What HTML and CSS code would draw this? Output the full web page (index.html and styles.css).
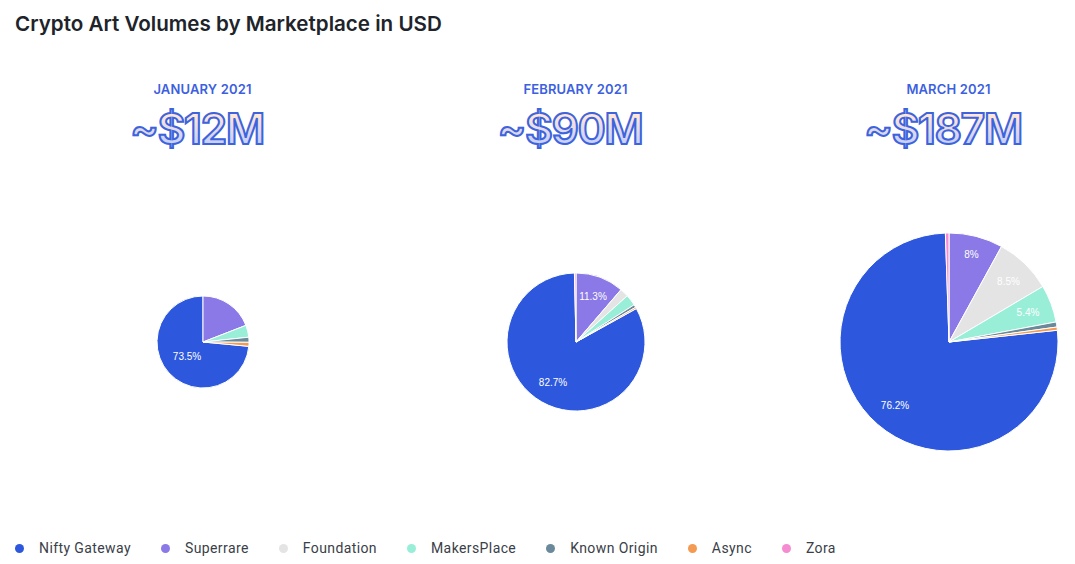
FILE: index.html
```html
<!DOCTYPE html>
<html lang="en">
<head>
<meta charset="utf-8">
<title>Crypto Art Volumes by Marketplace in USD</title>
<link rel="stylesheet" href="styles.css">
</head>
<body>
<main class="page">
  <h1 class="title">Crypto Art Volumes by Marketplace in USD</h1>
  <section class="charts">
    <article class="chart">
      <h2 class="month">JANUARY 2021</h2>
      <p class="total">~$12M</p>
      <div class="pie-area">
        <svg class="pie pie-small" viewBox="-47 -47 94 94" aria-label="January 2021 pie">
          <path class="s-nifty" d="M0 0L45.8 4.33A46 46 0 1 1 0 -46Z"/>
          <path class="s-super" d="M0 0L0 -46A46 46 0 0 1 42.89 -16.63Z"/>
          <path class="s-makers" d="M0 0L42.89 -16.63A46 46 0 0 1 45.75 -4.81Z"/>
          <path class="s-known" d="M0 0L45.75 -4.81A46 46 0 0 1 46 .32Z"/>
          <path class="s-async" d="M0 0L46 .32A46 46 0 0 1 45.8 4.33Z"/>
          <text class="label" x="-16" y="17.5" text-anchor="middle">73.5%</text>
        </svg>
      </div>
    </article>
    <article class="chart">
      <h2 class="month">FEBRUARY 2021</h2>
      <p class="total">~$90M</p>
      <div class="pie-area">
        <svg class="pie pie-medium" viewBox="-70 -70 140 140" aria-label="February 2021 pie">
          <path class="s-nifty" d="M0 0L60.35 -33.45A69 69 0 1 1 -1.57 -68.98Z"/>
          <path class="s-super" d="M0 0L0 -69A69 69 0 0 1 45 -52.31Z"/>
          <path class="s-found" d="M0 0L45 -52.31A69 69 0 0 1 51.28 -46.17Z"/>
          <path class="s-makers" d="M0 0L51.28 -46.17A69 69 0 0 1 58.13 -37.18Z"/>
          <path class="s-known" d="M0 0L58.13 -37.18A69 69 0 0 1 59.64 -34.71Z"/>
          <path class="s-async" d="M0 0L59.64 -34.71A69 69 0 0 1 60.35 -33.45Z"/>
          <path class="s-zora" d="M0 0L-1.57 -68.98A69 69 0 0 1 0 -69Z"/>
          <text class="label" x="-23" y="43.5" text-anchor="middle">82.7%</text>
          <text class="label" x="17" y="-42.5" text-anchor="middle">11.3%</text>
        </svg>
      </div>
    </article>
    <article class="chart">
      <h2 class="month">MARCH 2021</h2>
      <p class="total">~$187M</p>
      <div class="pie-area">
        <svg class="pie pie-large" viewBox="-110 -110 220 220" aria-label="March 2021 pie">
          <path class="s-nifty" d="M0 0L108.37 -11.77A109 109 0 1 1 -3.61 -108.94Z"/>
          <path class="s-super" d="M0 0L0 -109A109 109 0 0 1 52.5 -95.5Z"/>
          <path class="s-found" d="M0 0L52.5 -95.5A109 109 0 0 1 93.8 -55.5Z"/>
          <path class="s-makers" d="M0 0L93.8 -55.5A109 109 0 0 1 107.1 -20.05Z"/>
          <path class="s-known" d="M0 0L107.1 -20.05A109 109 0 0 1 107.96 -14.98Z"/>
          <path class="s-async" d="M0 0L107.96 -14.98A109 109 0 0 1 108.37 -11.77Z"/>
          <path class="s-zora" d="M0 0L-3.61 -108.94A109 109 0 0 1 0 -109Z"/>
          <text class="label" x="-54" y="66.5" text-anchor="middle">76.2%</text>
          <text class="label" x="22.5" y="-84" text-anchor="middle">8%</text>
          <text class="label" x="59.5" y="-57" text-anchor="middle">8.5%</text>
          <text class="label" x="79" y="-26" text-anchor="middle">5.4%</text>
        </svg>
      </div>
    </article>
  </section>
  <ul class="legend">
    <li class="legend-item"><span class="dot d-nifty"></span>Nifty Gateway</li>
    <li class="legend-item"><span class="dot d-super"></span>Superrare</li>
    <li class="legend-item"><span class="dot d-found"></span>Foundation</li>
    <li class="legend-item"><span class="dot d-makers"></span>MakersPlace</li>
    <li class="legend-item"><span class="dot d-known"></span>Known Origin</li>
    <li class="legend-item"><span class="dot d-async"></span>Async</li>
    <li class="legend-item"><span class="dot d-zora"></span>Zora</li>
  </ul>
</main>
</body>
</html>
```
FILE: styles.css
```css
* { box-sizing: border-box; }
html, body { margin: 0; height: 100%; background: #fff; overflow: hidden; }
.page {
  height: 564px;
  display: flex;
  flex-direction: column;
  font-family: Inter, "Noto Sans", sans-serif;
  color: #222;
}
.title {
  margin: 0;
  padding: 11px 0 0 15px;
  font-size: 20.6px;
  line-height: 26px;
  font-weight: 600;
  color: #20242a;
}
.charts {
  display: grid;
  grid-template-columns: repeat(3, 220px);
  column-gap: 153px;
  padding-left: 93px;
  padding-top: 43px;
  flex: 1;
  min-height: 0;
}
.chart { display: flex; flex-direction: column; align-items: center; min-height: 0; }
.month {
  margin: 0 1px 0 0;
  font-size: 13px;
  line-height: 18px;
  font-weight: 600;
  letter-spacing: .15px;
  color: #3d5fe0;
  white-space: nowrap;
}
.total {
  margin: 5px 12px 0 0;
  font-size: 43px;
  line-height: 50px;
  font-weight: 600;
  letter-spacing: -1.5px;
  white-space: nowrap;
  background: linear-gradient(180deg, #ffe6d6 25%, #c9d1f6 78%);
  -webkit-background-clip: text;
  background-clip: text;
  color: transparent;
  -webkit-text-stroke: 2px #3d64de;
}
.pie-area {
  flex: 1;
  width: 100%;
  display: flex;
  align-items: center;
  justify-content: center;
  padding-bottom: 8px;
  min-height: 0;
}
.pie { display: block; }
.pie-small { width: 94px; height: 94px; }
.pie-medium { width: 140px; height: 140px; }
.pie-large { width: 220px; height: 220px; }
.pie path { stroke: #fff; stroke-width: 1; stroke-linejoin: round; }
.label { font-family: "Liberation Sans", Arial, sans-serif; font-size: 10px; fill: #fff; }
.s-nifty { fill: #2d58de; }
.s-super { fill: #8a79e6; }
.s-found { fill: #e4e4e4; }
.s-makers { fill: #99eed8; }
.s-known { fill: #6a8a9c; }
.s-async { fill: #f39b52; }
.s-zora { fill: #f58bd0; }
.legend {
  list-style: none;
  margin: 0;
  padding: 0 0 6px 15px;
  display: flex;
  column-gap: 30px;
}
.legend-item {
  display: flex;
  align-items: center;
  column-gap: 15px;
  font-family: Roboto, sans-serif;
  font-size: 14px;
  line-height: 20px;
  letter-spacing: .4px;
  color: #3a4048;
  white-space: nowrap;
}
.dot { width: 9px; height: 9px; border-radius: 50%; flex: none; }
.d-nifty { background: #2d58de; }
.d-super { background: #8a79e6; }
.d-found { background: #e4e4e4; }
.d-makers { background: #99eed8; }
.d-known { background: #6a8a9c; }
.d-async { background: #f39b52; }
.d-zora { background: #f58bd0; }
```
